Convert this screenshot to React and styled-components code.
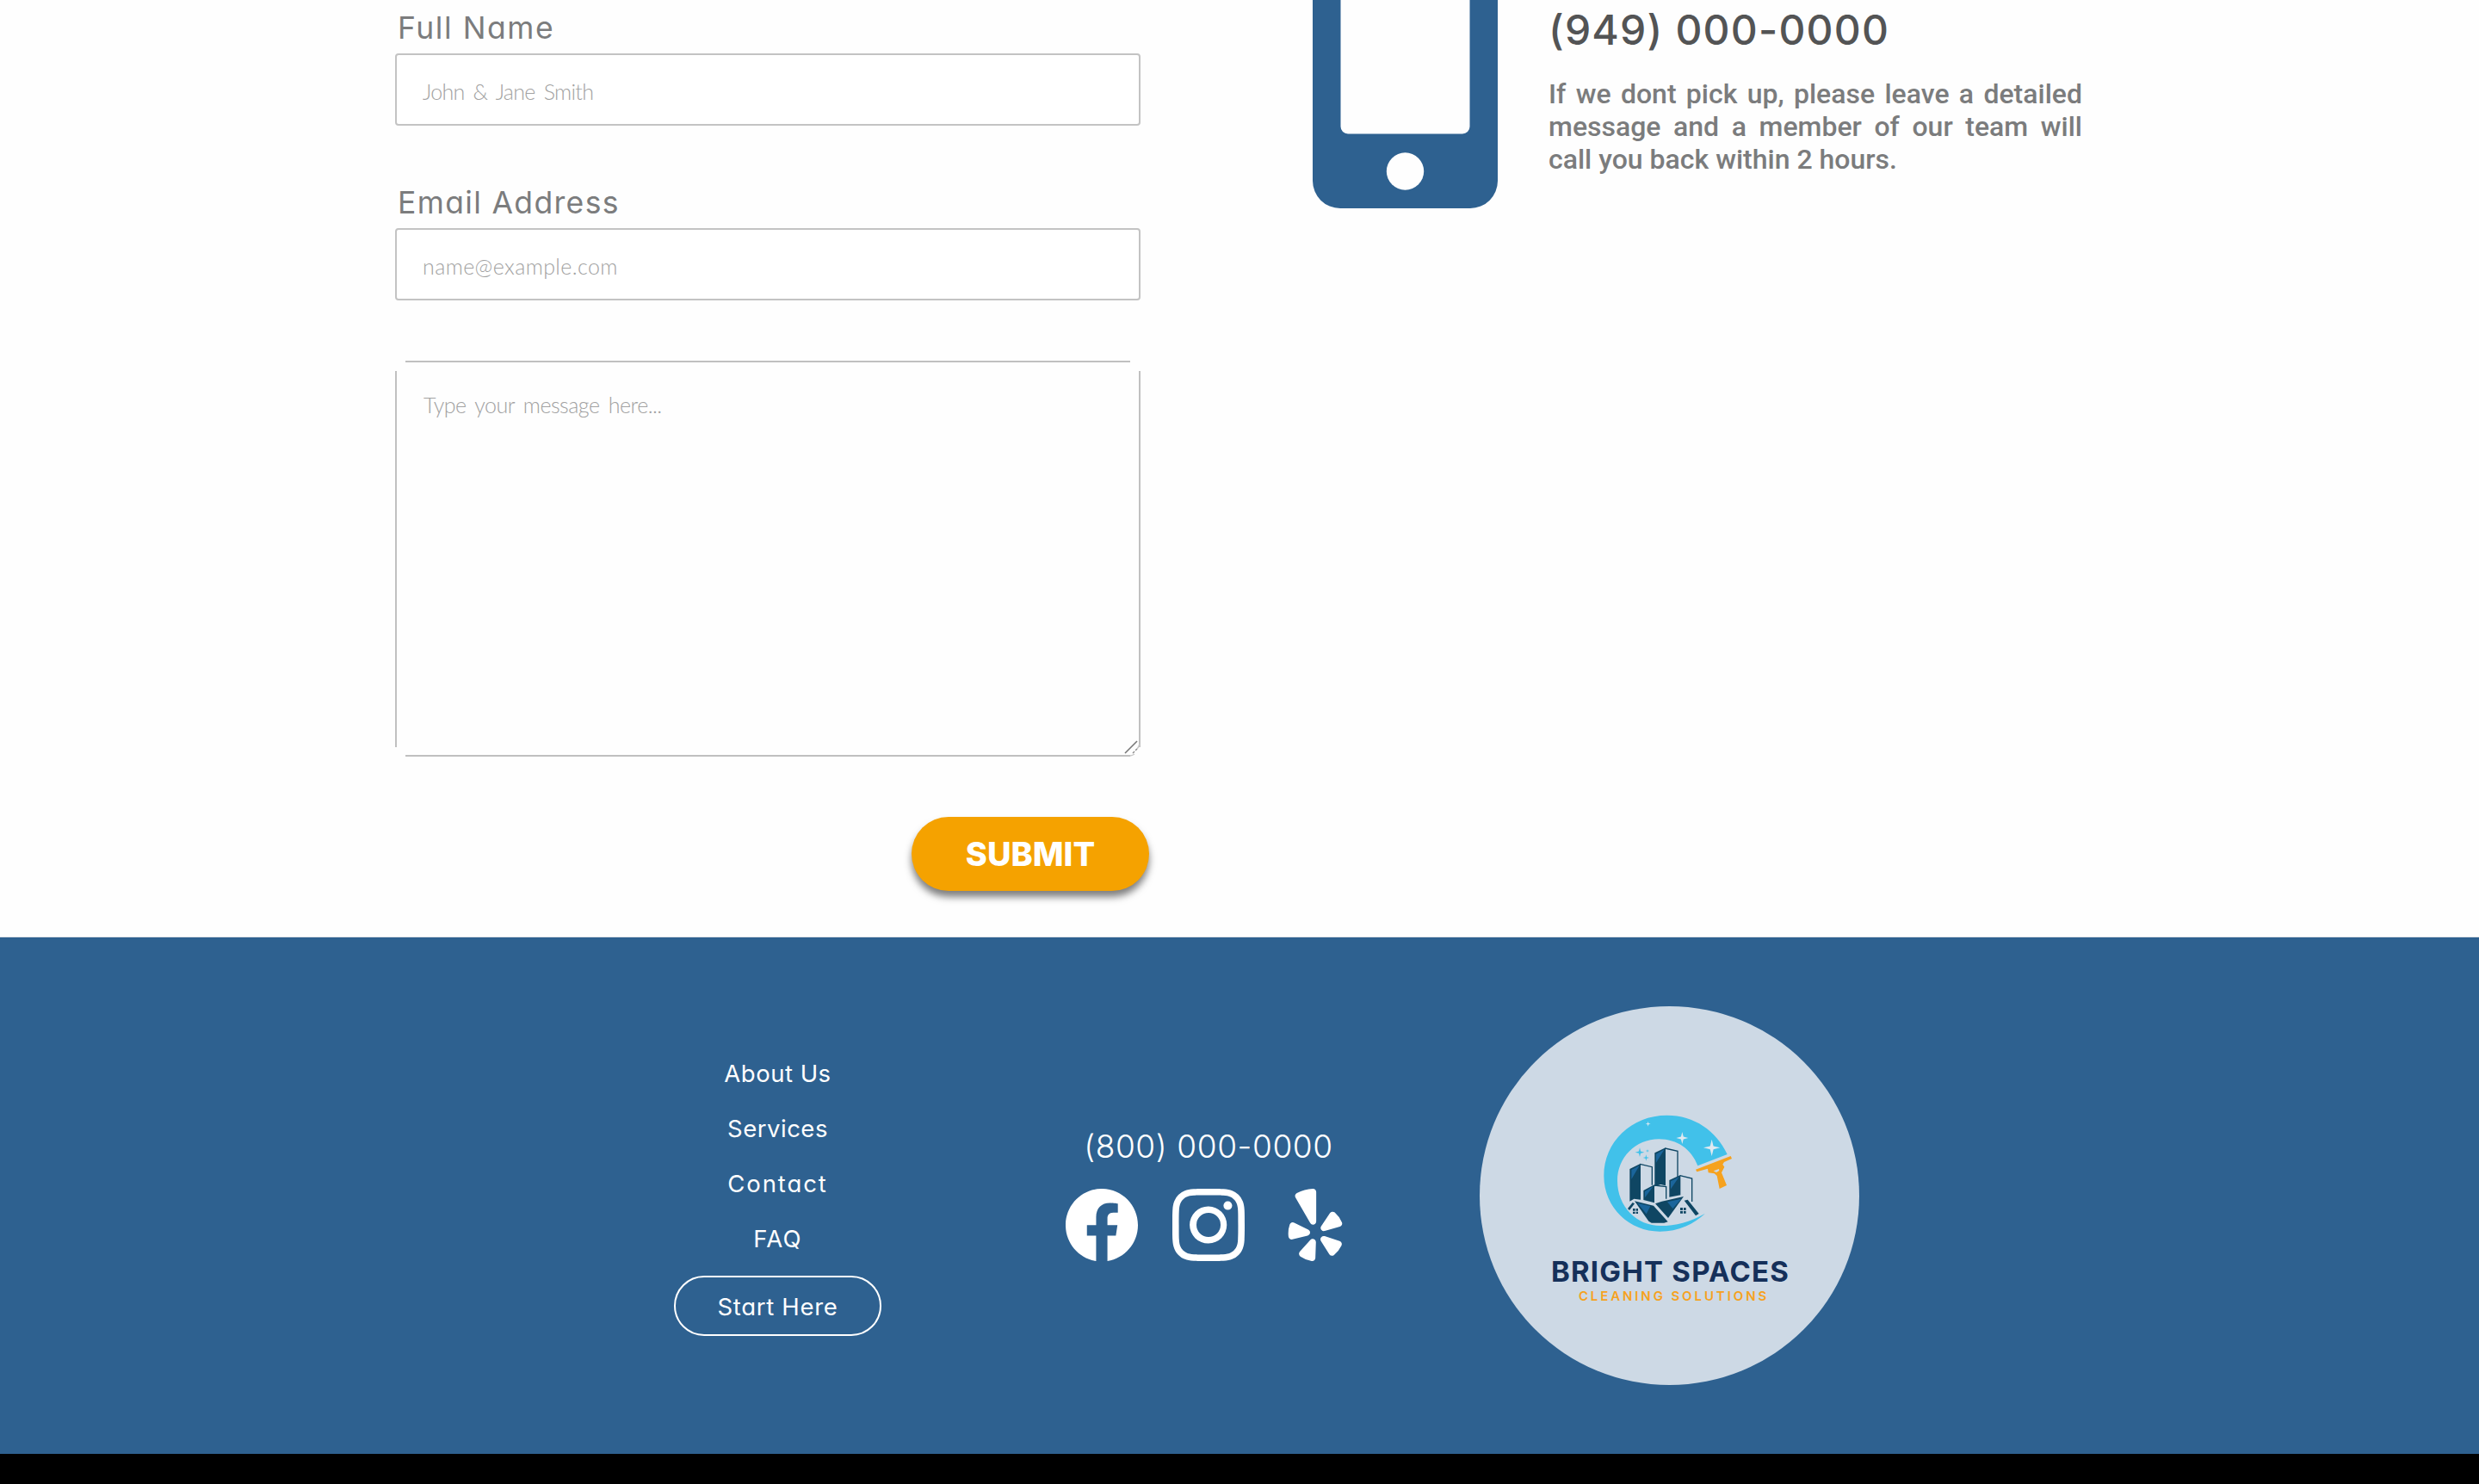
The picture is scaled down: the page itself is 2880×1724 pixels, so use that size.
import React from "react";
import styled, { createGlobalStyle } from "styled-components";
import { BsFacebook, BsInstagram } from "react-icons/bs";
import { FaYelp } from "react-icons/fa";

const blue = "#2e6190";

const GlobalStyle = createGlobalStyle`
  * { box-sizing: border-box; }
  html, body { margin: 0; background: #000; }
  body {
    font-family: Inter, "Open Sans", sans-serif;
    font-feature-settings: "cv11";
    overflow: hidden;
  }
  input, textarea, button { font-family: inherit; font-feature-settings: inherit; }
`;

const Page = styled.div`
  width: 2880px;
  height: 1724px;
  background: #000;
`;

const Main = styled.main`
  display: flex;
  align-items: flex-start;
  height: 1089px;
  padding-left: 459px;
  background: #fefefe;
  border-bottom: 1px solid #dfe3e8;
`;

const Form = styled.form`
  display: flex;
  flex-direction: column;
  width: 866px;
  margin-right: 200px;
`;

const Field = styled.div`
  display: flex;
  flex-direction: column;
  margin-bottom: ${(p) => p.$gap}px;
`;

const Label = styled.label`
  height: 62px;
  padding: 4px 0 0 3px;
  font-size: 35.5px;
  line-height: 57px;
  letter-spacing: ${(p) => p.$spacing}px;
  color: #7b7c7d;
`;

const Input = styled.input`
  width: 100%;
  height: 84px;
  padding: 3px 30px 0;
  border: 2px solid #c3c3c3;
  border-radius: 4px;
  background: #fff;
  font: 300 25px Lato, sans-serif;
  letter-spacing: ${(p) => p.$spacing}px;
  word-spacing: 4px;
  outline: none;
  &::placeholder { color: #a2a2a2; opacity: 1; }
`;

const line = "linear-gradient(#c0c0c0, #c0c0c0)";

const MessageBox = styled.div`
  position: relative;
  height: 460px;
  background:
    ${line} center top / calc(100% - 24px) 2px no-repeat,
    ${line} center bottom / calc(100% - 24px) 2px no-repeat,
    ${line} left center / 2px calc(100% - 23px) no-repeat,
    ${line} right center / 2px calc(100% - 23px) no-repeat;
`;

const Message = styled.textarea`
  display: block;
  width: 100%;
  height: 100%;
  padding: 35px 33px;
  border: 0;
  background: transparent;
  font: 300 25px/32px Lato, sans-serif;
  letter-spacing: -0.5px;
  word-spacing: 4px;
  resize: none;
  outline: none;
  &::placeholder { color: #a2a2a2; opacity: 1; }
`;

const Grip = styled.svg`
  position: absolute;
  right: 0;
  bottom: 0;
`;

const Submit = styled.button`
  align-self: flex-end;
  width: 276px;
  height: 86px;
  margin: 70px -10px 0 0;
  padding: 1px 0 0;
  border: 0;
  border-radius: 43px;
  background: #f5a200;
  box-shadow: 0 7px 8px rgba(0, 0, 0, 0.5);
  color: #fff;
  font-size: 38px;
  font-weight: 800;
  line-height: 85px;
`;

const CallPanel = styled.section`
  display: flex;
  align-items: flex-start;
  gap: 59px;
`;

const CallText = styled.div`
  width: 620px;
`;

const CallNumber = styled.div`
  padding-top: 1px;
  font-size: 48px;
  font-weight: 500;
  line-height: 67px;
  letter-spacing: 1.21px;
  color: #535455;
`;

const CallNote = styled.p`
  margin: 22px 0 0;
  font: 500 32px/38px Roboto, sans-serif;
  text-align: justify;
  color: #7b7c7d;
`;

const Footer = styled.footer`
  display: flex;
  align-items: flex-start;
  height: 600px;
  padding-left: 783px;
  background: ${blue};
  color: #fff;
`;

const Nav = styled.nav`
  display: flex;
  flex-direction: column;
  align-items: center;
  width: 241px;
  margin-top: 126px;
`;

const NavLink = styled.a`
  font-size: 27.5px;
  line-height: 64px;
  letter-spacing: ${(p) => p.$spacing}px;
  color: #fff;
`;

const StartLink = styled(NavLink)`
  width: 241px;
  height: 70px;
  margin-top: 11px;
  padding-top: 1px;
  border: 2px solid #fff;
  border-radius: 36px;
  line-height: 66px;
  text-align: center;
`;

const Contact = styled.div`
  display: flex;
  flex-direction: column;
  align-items: center;
  gap: 24px;
  margin: 218px 0 0 214px;
`;

const FooterPhone = styled.div`
  font-size: 37px;
  font-weight: 300;
  line-height: 50px;
  letter-spacing: 0.59px;
`;

const Socials = styled.div`
  display: flex;
  gap: 40px;
  font-size: 84px;
  svg { display: block; }
`;

const Badge = styled.div`
  display: flex;
  flex-direction: column;
  align-items: center;
  width: 441px;
  height: 440px;
  margin: 80px 0 0 149px;
  padding-top: 111px;
  border-radius: 50%;
  background: #cdd9e5;
`;

const BrandName = styled.div`
  margin-top: 7px;
  padding-left: 2px;
  font-size: 33px;
  font-weight: 650;
  line-height: 40px;
  letter-spacing: 1.2px;
  color: #15305a;
`;

const BrandTag = styled.div`
  padding-left: 10px;
  font-size: 15px;
  font-weight: 600;
  line-height: 18px;
  letter-spacing: 2.9px;
  color: #f6a21e;
`;

const Phone = () => (
  <svg width="215" height="242" viewBox="0 0 215 242">
    <path
      fill={blue}
      fillRule="evenodd"
      d="M0 0H215V210A32 32 0 0 1 183 242H32A32 32 0 0 1 0 210ZM32.5 0V147A8.5 8.5 0 0 0 41 155.500H174A8.500 8.500 0 0 0 182.500 147V0Z"
    />
    <circle cx="107.500" cy="199" r="21.700" fill="#fefefe" />
  </svg>
);

const star = (x, y, r) => {
  const k = r * 0.2;
  return `M${x} ${y - r}L${x + k} ${y - k}L${x + r} ${y}L${x + k} ${y + k}L${x} ${y + r}L${x - k} ${y + k}L${x - r} ${y}L${x - k} ${y - k}Z`;
};

const Logo = () => (
  <svg width="200" height="170" viewBox="0 0 600 510">
    <path
      fill="#41c1ea"
      d="M500 183C462 101 385 47 290 47C165 47 70 140 70 258C70 370 160 452 265 452C330 452 385 425 423 389C370 420 320 432 268 432C185 432 117 365 117 275C117 195 180 130 262 130C325 130 375 165 397 223Z"
    />
    <path fill="#dfe9f0" d={star(224, 77, 9) + star(343, 126, 21) + star(446, 160, 29)} />
    <path fill="#41c1ea" d={star(195, 176, 16) + star(217, 195, 11) + star(222, 171, 6)} />
    <g fill="#0f4663">
      <path d="M160 234L198 215V341L175 338L160 347Z" />
      <path d="M247 178L285 160V292L268 288L247 295Z" />
      <path d="M208 309L246 289V352L208 342Z" />
      <path d="M298 273L337 255V325L298 332Z" />
      <path d="M177 346L243 362L293 418L280 422H236L226 416Z" />
      <path d="M249 355L272 347L348 330L294 405Z" />
      <path d="M350 344L362 341L401 390L390 397Z" />
      <path d="M153 372L170 351L177 355L159 378Z" />
    </g>
    <path
      fill="none"
      stroke="#0f4663"
      strokeWidth="4"
      d="M196 217L238 227V290M283 162L327 172V268M246 291L287 296V338M335 257L377 267V348"
    />
    <g fill="#1b659b">
      <path d="M166 237L194 222L166 270Z" />
      <path d="M252 182L281 166L252 212Z" />
      <path d="M213 312L242 295L213 334Z" />
      <path d="M303 277L332 262L303 304Z" />
      <path d="M187 353L232 364L218 391Z" />
      <path d="M291 349L340 338L310 372Z" />
    </g>
    <path
      fill="#0f4663"
      d="M171 372H179V380H171ZM182 372H189V380H182ZM171 383H179V390H171ZM182 383H189V390H182ZM336 369H345V378H336ZM348 369H356V378H348ZM336 381H345V389H336ZM348 381H356V389H348Z"
    />
    <path
      fill="#f6a21e"
      fillRule="evenodd"
      d="M390 236L512 189L516 198L489 210L484 218L490 227L480 247L498 291L473 303L464 258L455 250L434 247L432 233L394 244ZM452 241L462 246L472 240L471 234Z"
    />
  </svg>
);

const links = [
  ["About Us", 0.5],
  ["Services", 0.5],
  ["Contact", 1.9],
  ["FAQ", 1.3],
];

export default function App() {
  return (
    <Page>
      <GlobalStyle />
      <Main>
        <Form>
          <Field $gap={57}>
            <Label $spacing={1.55}>Full Name</Label>
            <Input $spacing={-0.7} placeholder="John & Jane Smith" />
          </Field>
          <Field $gap={70}>
            <Label $spacing={1.35}>Email Address</Label>
            <Input $spacing={0.4} placeholder="name@example.com" />
          </Field>
          <MessageBox>
            <Message placeholder="Type your message here..." />
            <Grip width="20" height="20" viewBox="0 0 20 20">
              <path d="M19 5Q18 9 16 11M8 19Q11 18.500 13 17" fill="none" stroke="#c8c8c8" strokeWidth="1.500" />
              <path d="M2 16L16 2" stroke="#777" strokeWidth="1.600" />
              <path d="M11 16L16 11" stroke="#888" strokeWidth="1.400" strokeDasharray="3 1.500" />
            </Grip>
          </MessageBox>
          <Submit type="button">SUBMIT</Submit>
        </Form>
        <CallPanel>
          <Phone />
          <CallText>
            <CallNumber>(949) 000-0000</CallNumber>
            <CallNote>
              If we dont pick up, please leave a detailed message and a member of our team will call you back within 2
              hours.
            </CallNote>
          </CallText>
        </CallPanel>
      </Main>
      <Footer>
        <Nav>
          {links.map(([text, spacing]) => (
            <NavLink key={text} $spacing={spacing}>
              {text}
            </NavLink>
          ))}
          <StartLink $spacing={0.7}>Start Here</StartLink>
        </Nav>
        <Contact>
          <FooterPhone>(800) 000-0000</FooterPhone>
          <Socials>
            <BsFacebook />
            <BsInstagram />
            <FaYelp />
          </Socials>
        </Contact>
        <Badge>
          <Logo />
          <BrandName>BRIGHT SPACES</BrandName>
          <BrandTag>CLEANING SOLUTIONS</BrandTag>
        </Badge>
      </Footer>
    </Page>
  );
}
